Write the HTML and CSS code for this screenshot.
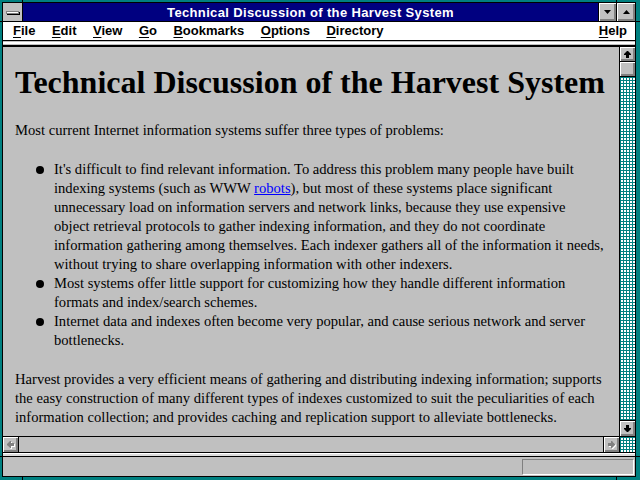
FILE: index.html
```html
<!DOCTYPE html>
<html>
<head>
<meta charset="utf-8">
<title>Technical Discussion of the Harvest System</title>
<link rel="stylesheet" href="styles.css">
</head>
<body>
<div class="window">
  <div class="titlebar">
    <div class="sysmenu"><span class="sysbar"></span></div>
    <div class="title">Technical Discussion of the Harvest System</div>
    <div class="tbtn"><svg width="7" height="4" viewBox="0 0 7 4"><polygon points="0,0 7,0 3.5,4" fill="#000"/></svg></div>
    <div class="tbtn last"><svg width="7" height="4" viewBox="0 0 7 4"><polygon points="0,4 7,4 3.5,0" fill="#000"/></svg></div>
  </div>
  <div class="menubar">
    <span class="mi"><u>F</u>ile</span>
    <span class="mi"><u>E</u>dit</span>
    <span class="mi"><u>V</u>iew</span>
    <span class="mi"><u>G</u>o</span>
    <span class="mi"><u>B</u>ookmarks</span>
    <span class="mi"><u>O</u>ptions</span>
    <span class="mi"><u>D</u>irectory</span>
    <span class="mi help"><u>H</u>elp</span>
  </div>
  <div class="toolsep"></div>
  <div class="main">
    <div class="content">
      <h1>Technical Discussion of the Harvest System</h1>
      <p>Most current Internet information systems suffer three types of problems:</p>
      <ul>
        <li>It's difficult to find relevant information. To address this problem many people have built indexing systems (such as WWW <a href="#">robots</a>), but most of these systems place significant unnecessary load on information servers and network links, because they use expensive object retrieval protocols to gather indexing information, and they do not coordinate information gathering among themselves. Each indexer gathers all of the information it needs, without trying to share overlapping information with other indexers.</li>
        <li>Most systems offer little support for customizing how they handle different information formats and index/search schemes.</li>
        <li>Internet data and indexes often become very popular, and cause serious network and server bottlenecks.</li>
      </ul>
      <p>Harvest provides a very efficient means of gathering and distributing indexing information; supports the easy construction of many different types of indexes customized to suit the peculiarities of each information collection; and provides caching and replication support to alleviate bottlenecks.</p>
    </div>
    <div class="vscroll">
      <div class="sbtn up"><svg width="7" height="7" viewBox="0 0 7 7"><path d="M3 0h1l3 3v1H5v3H2V4H0V3z" fill="#000"/></svg></div>
      <div class="thumb"></div>
      <div class="track"></div>
      <div class="sbtn down"><svg width="7" height="7" viewBox="0 0 7 7"><path d="M3 7h1l3-3V3H5V0H2v3H0v1z" fill="#000"/></svg></div>
    </div>
  </div>
  <div class="hrow">
    <div class="hbtn left"><svg width="8" height="8" viewBox="0 0 8 8"><path d="M1 4v1l3 3h1V6h3V3H5V1H4z" fill="#fff"/><path d="M0 3v1l3 3h1V5h3V2H4V0H3z" fill="#808080"/></svg></div>
    <div class="htrack"></div>
    <div class="hbtn right"><svg width="8" height="8" viewBox="0 0 8 8"><path d="M8 4v1L5 8H4V6H1V3h3V1h1z" fill="#fff"/><path d="M7 3v1L4 7H3V5H0V2h3V0h1z" fill="#808080"/></svg></div>
    <div class="corner"></div>
  </div>
  <div class="statsep"></div>
  <div class="status"><div class="statbox"></div></div>
</div>
</body>
</html>
```
FILE: styles.css
```css
* { box-sizing: border-box; }
html, body { margin: 0; padding: 0; }
body {
  width: 640px;
  height: 480px;
  overflow: hidden;
  padding: 2px 4px 3px 2px;
  background-color: #008080;
  background-image:
    linear-gradient(90deg, transparent 22px, #000 22px, #000 23px, transparent 23px, transparent 616px, #000 616px, #000 617px, transparent 617px),
    linear-gradient(transparent 21px, #000 21px, #000 22px, transparent 22px, transparent 456px, #000 456px, #000 457px, transparent 457px);
  font-family: "Liberation Sans", Arial, sans-serif;
}
.window {
  width: 634px;
  height: 475px;
  border: 1px solid #000;
  display: flex;
  flex-direction: column;
  background: #c0c0c0;
}
.titlebar {
  height: 19px;
  flex: none;
  border-bottom: 1px solid #000;
  background: #000080;
  display: flex;
}
.sysmenu {
  width: 20px;
  border-right: 1px solid #000;
  background: #c0c0c0;
  display: flex;
  align-items: center;
  justify-content: center;
  padding-right: 1px;
}
.sysbar {
  display: block;
  width: 13px;
  height: 3px;
  background: #fff;
  border: 1px solid #808080;
  box-shadow: 1px 1px 0 #000;
}
.title {
  flex: 1;
  color: #fff;
  font-weight: bold;
  font-size: 13px;
  letter-spacing: 0.35px;
  line-height: 16px;
  padding-top: 2px;
  text-align: center;
  white-space: nowrap;
}
.tbtn {
  width: 18px;
  border-left: 1px solid #000;
  background: #c0c0c0;
  box-shadow: inset 1px 1px #fff, inset -1px -1px #808080, inset -2px -2px #808080;
  display: flex;
  align-items: center;
  justify-content: center;
}
.tbtn.last { width: 19px; }
.menubar {
  height: 19px;
  flex: none;
  border-bottom: 1px solid #000;
  background: #fff;
  display: flex;
  gap: 16.5px;
  padding: 0 8px 0 10px;
  font-weight: bold;
  font-size: 13px;
  line-height: 18px;
  color: #000;
}
.mi u { text-decoration-thickness: 1px; text-underline-offset: 2px; }
.help { margin-left: auto; }
.toolsep {
  height: 6px;
  flex: none;
  background: linear-gradient(#c0c0c0 0 1px, #fff 1px 3px, #c0c0c0 3px 4px, #000 4px 6px);
}
.main {
  height: 389px;
  flex: none;
  display: flex;
}
.content {
  flex: 1;
  overflow: hidden;
  padding: 17px 14.5px 0 12px;
  font-family: "Liberation Serif", "Times New Roman", serif;
  font-size: 14.6px;
  line-height: 19px;
  color: #000;
}
.content h1 {
  margin: 0 0 21px;
  font-size: 32px;
  line-height: 36px;
  font-weight: bold;
  white-space: nowrap;
}
.content p { margin: 0; }
.content ul {
  list-style: none;
  margin: 20px 0;
  padding: 0 0 0 39px;
}
.content li { position: relative; }
.content li::before {
  content: "";
  position: absolute;
  left: -18px;
  top: 6px;
  width: 8px;
  height: 8px;
  border-radius: 50%;
  background: #000;
}
.content a { color: #0000ff; text-decoration: underline; }
.vscroll {
  width: 16px;
  border-left: 1px solid #000;
  display: flex;
  flex-direction: column;
}
.sbtn, .thumb, .hbtn {
  background: #c0c0c0;
  box-shadow: inset 1px 1px #fff, inset -1px -1px #808080, inset -2px -2px #808080;
}
.sbtn {
  height: 15px;
  flex: none;
  display: flex;
  align-items: center;
  justify-content: center;
}
.sbtn.up { border-bottom: 1px solid #000; }
.sbtn.down { height: 16px; border-top: 1px solid #000; }
.thumb {
  height: 15px;
  flex: none;
  border-bottom: 1px solid #000;
}
.track, .corner {
  background-color: #fff;
  background-image:
    linear-gradient(90deg, #008080 1px, transparent 1px),
    linear-gradient(#008080 1px, transparent 1px);
  background-size: 3px 3px;
}
.track { flex: 1; }
.hrow {
  height: 16px;
  flex: none;
  border-top: 1px solid #000;
  display: flex;
}
.hbtn {
  width: 16px;
  display: flex;
  align-items: center;
  justify-content: center;
}
.hbtn.left { border-right: 1px solid #000; }
.hbtn.right { border-left: 1px solid #000; }
.htrack { flex: 1; background: #c0c0c0; }
.corner {
  width: 16px;
  border-left: 1px solid #000;
}
.statsep {
  height: 5px;
  flex: none;
  background: linear-gradient(#000 0 1px, #fff 1px 2px, #dcdcdc 2px 4px, #000 4px 5px);
}
.status {
  flex: 1;
  display: flex;
  justify-content: flex-end;
  padding: 2px 1px 1px 0;
}
.statbox {
  width: 112px;
  border: 1px solid;
  border-color: #808080 #fff #fff #808080;
}
```
